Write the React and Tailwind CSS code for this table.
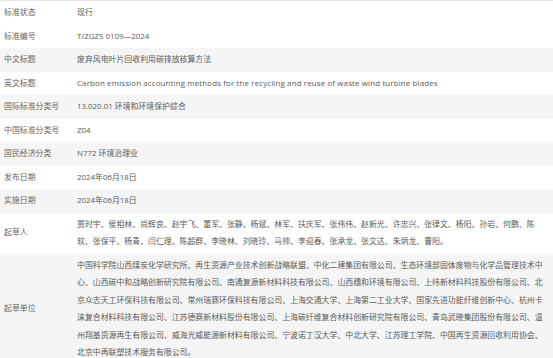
import React from 'react';

const rows = [
  { label: '标准状态', value: '现行' },
  { label: '标准编号', value: 'T/ZGZS 0109—2024' },
  { label: '中文标题', value: '废弃风电叶片回收利用碳排放核算方法', shade: true },
  { label: '英文标题', value: 'Carbon emission accounting methods for the recycling and reuse of waste wind turbine blades', latin: true },
  { label: '国际标准分类号', value: '13.020.01 环境和环境保护综合', shade: true },
  { label: '中国标准分类号', value: 'Z04' },
  { label: '国民经济分类', value: 'N772 环境治理业', shade: true },
  { label: '发布日期', value: '2024年06月18日' },
  { label: '实施日期', value: '2024年06月18日', shade: true },
  {
    label: '起草人',
    value:
      '贾时宇、侯相林、尚辉良、赵宇飞、董军、张静、杨斌、林军、扶庆军、张伟伟、赵新光、许忠兴、张律文、杨阳、孙岩、何鹏、陈软、张保平、杨青、闫仁理、陈超群、李晓林、刘晓玲、马帅、李迎春、张承龙、张文达、朱炳龙、曹阳。',
  },
  {
    label: '起草单位',
    value:
      '中国科学院山西煤炭化学研究所、再生资源产业技术创新战略联盟、中化二建集团有限公司、生态环境部固体废物与化学品管理技术中心、山西碳中和战略创新研究院有限公司、南通复源新材料科技有限公司、山西穗和环境有限公司、上纬新材料科技股份有限公司、北京众志天工环保科技有限公司、常州瑞赛环保科技有限公司、上海交通大学、上海第二工业大学、国家先进功能纤维创新中心、杭州卡涞复合材料科技有限公司、江苏德赛新材料股份有限公司、上海碳纤维复合材料创新研究院有限公司、青岛武晓集团股份有限公司、温州翔基资源再生有限公司、威海光威能源新材料有限公司、宁波诺丁汉大学、中北大学、江苏理工学院、中国再生资源回收利用协会、北京中再联塑技术服务有限公司。',
    shade: true,
  },
];

export default function App() {
  return (
    <div
      className="w-[553px] h-[358px] overflow-hidden bg-white border-t border-[#dfe9f5] text-[7.9px] leading-[17.5px] text-[#5a5a5a]"
      style={{ fontFamily: '"Open Sans", "Noto Sans CJK SC", sans-serif' }}
    >
      {rows.map((row) => (
        <div key={row.label} className={`flex items-center ${row.shade ? 'bg-[#f5f5f5]' : 'bg-white'}`}>
          <div className="w-[76px] shrink-0 pl-[4px] text-[#666]">{row.label}</div>
          <div className={`flex-1 py-[3px] pl-px pr-[9px] ${row.latin ? 'tracking-[0.15px]' : ''}`}>{row.value}</div>
        </div>
      ))}
    </div>
  );
}
